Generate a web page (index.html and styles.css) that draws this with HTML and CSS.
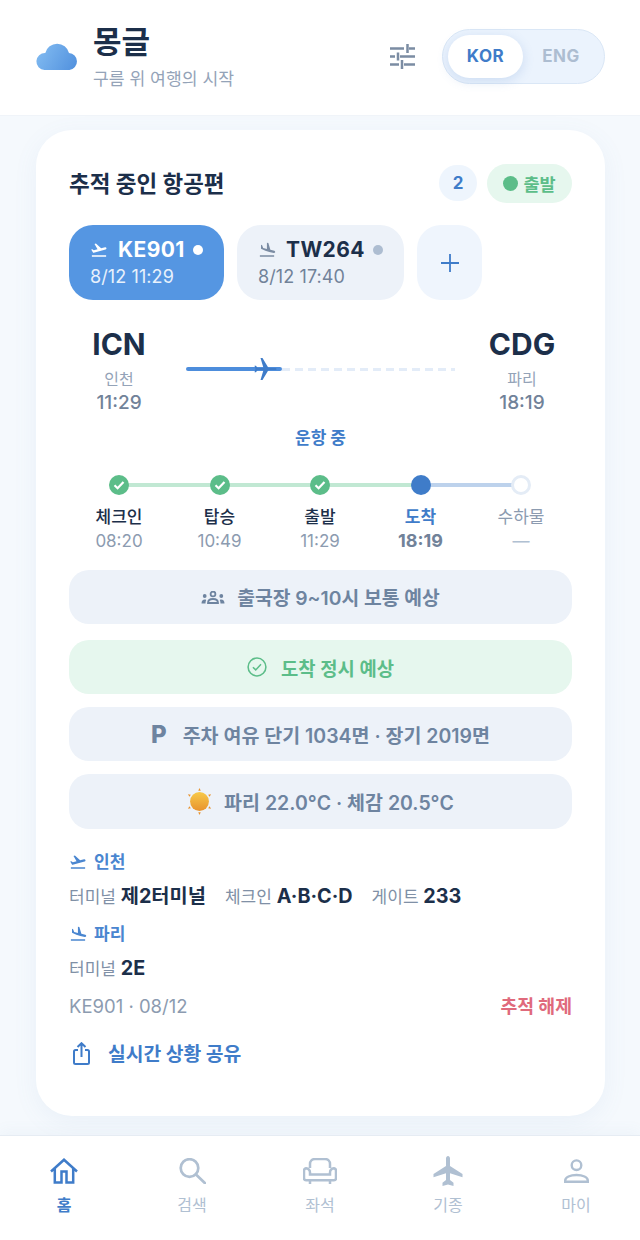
FILE: index.html
```html
<!DOCTYPE html>
<html lang="ko">
<head>
<meta charset="utf-8">
<title>몽글</title>
<link rel="stylesheet" href="styles.css">
</head>
<body>
<svg class="defs" width="0" height="0">
  <defs>
    <linearGradient id="cloudG" gradientUnits="userSpaceOnUse" x1="0" y1="4" x2="42" y2="28"><stop offset="0" stop-color="#84bdf2"/><stop offset="1" stop-color="#4f8fdd"/></linearGradient>
    <linearGradient id="sunG" x1="0" y1="0" x2="0" y2="1"><stop offset="0" stop-color="#f7c948"/><stop offset="1" stop-color="#e8932f"/></linearGradient>
    <symbol id="takeoff" viewBox="0 0 24 24"><path d="M2.500 19h19v2h-19zM22 9.500c-.2-.8-1-1.300-1.900-1.100L14.800 9.800 7.900 3.400l-1.900.5 4.100 7.200-5 1.300-2-1.500-1.500.4 2.600 4.500.8-.2 15.800-4.200c.8-.3 1.300-1.100 1.200-1.900z"/></symbol>
    <symbol id="landing" viewBox="0 0 24 24"><path d="M2.500 19h19v2h-19zM9.800 13.100l5.300 1.400 5.900 1.600c.8.200 1.700-.3 1.900-1.100.2-.8-.3-1.700-1.100-1.900l-5.300-1.400L13.800 2.800 11.900 2.300v8.300L6.900 9.200 5.500 5.500 4 5.100v5.200z"/></symbol>
  </defs>
</svg>
<div class="app">
  <header class="top">
    <div class="brand">
      <svg class="cloud" viewBox="0 0 42 28"><path fill="url(#cloudG)" d="M8.500 28A8.500 8.500 0 0 1 9.300 11 A12.200 12.200 0 0 1 33 10.900 A8.600 8.600 0 0 1 33.500 28Z"/></svg>
      <div class="brand-text">
        <div class="brand-name">몽글</div>
        <div class="brand-sub">구름 위 여행의 시작</div>
      </div>
    </div>
    <div class="top-right">
      <svg class="sliders" viewBox="0 0 25 25" fill="none" stroke="#7b8ca3" stroke-width="2.500"><path d="M0 4.500h14M19 4.500h6M17.500 0v9M0 12.500h5M10 12.500h15M8 8.500v8M0 20.500h9M14 20.500h11M12 16v9"/></svg>
      <div class="lang">
        <span class="lang-on">KOR</span>
        <span class="lang-off">ENG</span>
      </div>
    </div>
  </header>

  <main class="main">
    <section class="card">
      <div class="card-head">
        <h2 class="card-title">추적 중인 항공편</h2>
        <div class="head-badges">
          <span class="count">2</span>
          <span class="status"><i class="status-dot"></i>출발</span>
        </div>
      </div>

      <div class="flights">
        <div class="flight active">
          <div class="flight-no"><svg class="fi"><use href="#takeoff"/></svg>KE901<i class="fdot"></i></div>
          <div class="flight-time">8/12 11:29</div>
        </div>
        <div class="flight idle">
          <div class="flight-no"><svg class="fi"><use href="#landing"/></svg>TW264<i class="fdot"></i></div>
          <div class="flight-time">8/12 17:40</div>
        </div>
        <div class="flight-add">
          <svg viewBox="0 0 18 18" fill="none" stroke="#3f7cc9" stroke-width="1.800"><path d="M9 0v18M0 9h18"/></svg>
        </div>
      </div>

      <div class="route">
        <div class="airport">
          <div class="code">ICN</div>
          <div class="city">인천</div>
          <div class="atime">11:29</div>
        </div>
        <div class="track">
          <div class="track-done"></div>
          <div class="track-rest"></div>
          <svg class="track-plane" viewBox="0 0 24 24"><path fill="#3f7cc9" d="M23.500 12c0-.6-.5-1-1.500-1H15.500L9.500 1H7.500l3 10H4.500L3 8.800H1.500L2.500 12l-1 3.200H3L4.500 13h6l-3 10h2l6-10H22c1 0 1.500-.4 1.500-1z"/></svg>
        </div>
        <div class="airport">
          <div class="code">CDG</div>
          <div class="city">파리</div>
          <div class="atime">18:19</div>
        </div>
      </div>

      <div class="route-status">운항 중</div>

      <div class="steps">
        <div class="step done">
          <span class="node"><svg viewBox="0 0 20 20" fill="none" stroke="#fff" stroke-width="2.200"><path d="M5.500 10.300l3.100 3 5.900-6.300"/></svg></span>
          <span class="step-label">체크인</span><span class="step-time">08:20</span>
        </div>
        <div class="step done">
          <span class="node"><svg viewBox="0 0 20 20" fill="none" stroke="#fff" stroke-width="2.200"><path d="M5.500 10.300l3.100 3 5.900-6.300"/></svg></span>
          <span class="step-label">탑승</span><span class="step-time">10:49</span>
        </div>
        <div class="step done">
          <span class="node"><svg viewBox="0 0 20 20" fill="none" stroke="#fff" stroke-width="2.200"><path d="M5.500 10.300l3.100 3 5.900-6.300"/></svg></span>
          <span class="step-label">출발</span><span class="step-time">11:29</span>
        </div>
        <div class="step current">
          <span class="node"></span>
          <span class="step-label">도착</span><span class="step-time">18:19</span>
        </div>
        <div class="step todo">
          <span class="node"></span>
          <span class="step-label">수하물</span><span class="step-time">—</span>
        </div>
      </div>

      <div class="infos">
        <div class="info crowd">
          <svg class="i-people" viewBox="0 0 24 13" fill="#6e84a0"><circle cx="12" cy="3" r="2.400" fill="none" stroke="#6e84a0" stroke-width="1.800"/><path d="M7 12c0-2.600 2.200-4 5-4s5 1.400 5 4z" fill="none" stroke="#6e84a0" stroke-width="1.800"/><circle cx="3.700" cy="5" r="1.900"/><circle cx="20.300" cy="5" r="1.900"/><path d="M.5 12.500c0-2.500 1.300-4 3.300-4 .6 0 1 .1 1.400.4-.5 1-.7 2.200-.7 3.600zM23.500 12.500c0-2.500-1.300-4-3.300-4-.6 0-1 .1-1.400.4.5 1 .7 2.200.7 3.600z"/></svg>
          <span>출국장 9~10시 보통 예상</span>
        </div>
        <div class="info good">
          <svg class="i-check" viewBox="0 0 22 22" fill="none" stroke="#5cbd89" stroke-width="1.700"><circle cx="11" cy="11" r="9.800"/><path d="M6.500 11.200l3.100 3 5.800-6.200"/></svg>
          <span>도착 정시 예상</span>
        </div>
        <div class="info">
          <span class="i-p">P</span>
          <span>주차 여유 단기 1034면 · 장기 2019면</span>
        </div>
        <div class="info">
          <svg class="i-sun" viewBox="0 0 26 28"><circle cx="13" cy="14" r="9.800" fill="url(#sunG)"/><path fill="#e8932f" d="M13 0l1.300 2.800h-2.600zM13 28l-1.300-2.800h2.600zM1 6.500l3 .6-1.500 2zM25 6.500l-3 .6 1.500 2zM1 21.500l3-.6-1.500-2zM25 21.500l-3-.6 1.500-2z"/></svg>
          <span>파리 22.0°C · 체감 20.5°C</span>
        </div>
      </div>

      <div class="details">
        <div class="d-head"><svg class="di"><use href="#takeoff"/></svg>인천</div>
        <div class="d-row">
          <span class="d-item">터미널 <b>제2터미널</b></span>
          <span class="d-item">체크인 <b>A·B·C·D</b></span>
          <span class="d-item">게이트 <b>233</b></span>
        </div>
        <div class="d-head second"><svg class="di"><use href="#landing"/></svg>파리</div>
        <div class="d-row">
          <span class="d-item">터미널 <b>2E</b></span>
        </div>
      </div>

      <div class="meta">
        <span class="meta-id">KE901 · 08/12</span>
        <span class="meta-off">추적 해제</span>
      </div>

      <div class="share">
        <svg viewBox="0 0 17 23" fill="none" stroke="#3f7cc9" stroke-width="2"><path d="M5 8H2.500A1.500 1.500 0 0 0 1 9.500v11A1.500 1.500 0 0 0 2.500 22h12a1.500 1.500 0 0 0 1.500-1.500v-11A1.500 1.500 0 0 0 14.500 8H12M8.500 15V1.500M4.500 5l4-3.800 4 3.800"/></svg>
        <span>실시간 상황 공유</span>
      </div>
    </section>
  </main>

  <nav class="tabs">
    <div class="tab on">
      <span class="tab-ico"><svg class="ico-home" viewBox="0 0 28 26" fill="none" stroke="#3f7cc9" stroke-width="2.500"><path d="M1 13.500L14 1.800 27 13.500M4.800 10.500v14h6.700v-11h5v11h6.700v-14"/></svg></span>
      <span class="tab-label">홈</span>
    </div>
    <div class="tab">
      <span class="tab-ico"><svg class="ico-search" viewBox="0 0 27 26" fill="none" stroke="#b0c0d2" stroke-width="2.700"><circle cx="10.500" cy="10" r="8.800"/><path d="M17 16.500l8.800 8.500" stroke-linecap="round"/></svg></span>
      <span class="tab-label">검색</span>
    </div>
    <div class="tab">
      <span class="tab-ico"><svg class="ico-seat" viewBox="0 0 34 26" fill="none" stroke="#b0c0d2" stroke-width="2.500"><path d="M7 10V6a5 5 0 0 1 5-5h10a5 5 0 0 1 5 5v4M7 16.500h20V14.500a4.500 4.500 0 0 1 4-4.300 2.500 2.500 0 0 1 2 2.500v7.600a2 2 0 0 1-2 2H3a2 2 0 0 1-2-2v-7.600a2.500 2.500 0 0 1 2-2.500 4.500 4.500 0 0 1 4 4.300zM7 22.500V26M27 22.500V26"/></svg></span>
      <span class="tab-label">좌석</span>
    </div>
    <div class="tab">
      <span class="tab-ico"><svg class="ico-plane" viewBox="0 0 30 30" fill="#b0c0d2"><path d="M13 2.500c0-1.300.9-2.500 2-2.500s2 1.200 2 2.500V10l12.500 8v3.200L17 17.200V24l3.500 2.800V30L15 28.500 9.500 30v-3.200L13 24v-6.800L.5 21.200V18L13 10z"/></svg></span>
      <span class="tab-label">기종</span>
    </div>
    <div class="tab">
      <span class="tab-ico"><svg class="ico-me" viewBox="0 0 25 24" fill="none" stroke="#b0c0d2" stroke-width="2.400"><circle cx="12.500" cy="6.200" r="4.800"/><path d="M1.200 22.800v-1.300c0-3.400 5-5.500 11.300-5.500s11.300 2.100 11.300 5.500v1.300z"/></svg></span>
      <span class="tab-label">마이</span>
    </div>
  </nav>
</div>
</body>
</html>
```

FILE: styles.css
```css
* { box-sizing: border-box; }
html, body { margin: 0; padding: 0; }
body {
  width: 640px;
  height: 1240px;
  overflow: hidden;
  font-family: Inter, "Noto Sans CJK KR", sans-serif;
  background: #f5f9fd;
  color: #1c2f4a;
}
.defs { position: absolute; }
.app { display: flex; flex-direction: column; height: 1240px; }

.top {
  height: 116px;
  background: #fff;
  border-bottom: 1px solid #f0f4f9;
  display: flex;
  align-items: center;
  justify-content: space-between;
  padding: 0 35px 3px 36px;
  flex: none;
}
.brand { display: flex; align-items: center; gap: 15px; }
.cloud { width: 42px; height: 28px; }
.brand-text { display: flex; flex-direction: column; }
.brand-name { font-size: 31px; font-weight: 700; line-height: 40px; color: #1c2f4a; }
.brand-sub { font-size: 17.200px; line-height: 24px; color: #94a3b8; margin-top: 5px; }
.top-right { display: flex; align-items: center; gap: 27px; }
.sliders { width: 25px; height: 25px; }
.lang {
  width: 163px;
  height: 55px;
  border-radius: 28px;
  background: #ebf3fd;
  border: 1.500px solid #dae7f6;
  padding: 5px;
  display: flex;
  align-items: center;
  font-size: 17px;
  font-weight: 700;
  letter-spacing: .5px;
}
.lang-on {
  width: 75px;
  height: 43px;
  border-radius: 22px;
  background: #fff;
  color: #3f7cc9;
  display: flex;
  align-items: center;
  justify-content: center;
  box-shadow: 0 3px 12px rgba(80, 130, 200, .2);
}
.lang-off { flex: 1; text-align: center; color: #adbdd1; }

.main { flex: 1; padding: 14px 35px 0 36px; min-height: 0; }
.card {
  height: 986px;
  background: #fff;
  border-radius: 36px;
  padding: 33px 33px 0 33px;
  box-shadow: 0 6px 24px rgba(100, 140, 190, .08);
}
.card-head { display: flex; align-items: center; justify-content: space-between; height: 40px; }
.card-title { margin: 0; padding-bottom: 3px; font-size: 22.500px; font-weight: 700; color: #1c2f4a; }
.head-badges { display: flex; align-items: center; gap: 10px; }
.count {
  width: 38px; height: 36px; border-radius: 18px; background: #eef5fd;
  color: #3f7cc9; font-size: 17px; font-weight: 700;
  display: flex; align-items: center; justify-content: center;
}
.status {
  width: 85px; height: 39px; border-radius: 20px; background: #e6f7ee;
  color: #5cbd89; font-size: 17.500px; font-weight: 700;
  display: flex; align-items: center; justify-content: center; gap: 5px;
}
.status-dot { width: 15px; height: 15px; border-radius: 50%; background: #5cbd89; }

.flights { display: flex; gap: 13px; margin-top: 22px; }
.flight { height: 75px; border-radius: 24px; padding: 0 21px; display: flex; flex-direction: column; justify-content: center; }
.flight.active { width: 155px; background: #5596e2; color: #fff; }
.flight.idle { width: 167px; background: #edf2f9; }
.flight-no { display: flex; align-items: center; font-size: 21px; font-weight: 700; line-height: 28px; letter-spacing: .4px; }
.flight.idle .flight-no { color: #1c2f4a; }
.fi { width: 18px; height: 18px; margin-right: 10px; fill: #fff; }
.flight.idle .fi { fill: #7b8ca3; }
.fdot { width: 10px; height: 10px; border-radius: 50%; background: #fff; margin-left: 8px; }
.flight.idle .fdot { background: #adbdd1; }
.flight-time { font-size: 18px; line-height: 24px; margin-top: 1px; letter-spacing: .1px; }
.flight.active .flight-time { color: #e8f1fc; }
.flight.idle .flight-time { color: #718299; }
.flight-add {
  width: 65px; height: 75px; border-radius: 24px; background: #eff5fd;
  display: flex; align-items: center; justify-content: center;
}
.flight-add svg { width: 18px; height: 18px; }

.route { display: flex; align-items: flex-start; justify-content: space-between; margin-top: 24px; padding: 0 16px; }
.airport { display: flex; flex-direction: column; align-items: center; width: 68px; }
.code { font-size: 30px; font-weight: 700; line-height: 40px; color: #1c2f4a; }
.city { font-size: 16px; line-height: 22px; color: #94a3b8; margin-top: 4px; }
.atime { font-size: 19px; font-weight: 500; line-height: 24px; color: #718299; margin-top: 1px; }
.track { flex: 1; position: relative; height: 4px; margin: 43px 33px 0; display: flex; }
.track-done { width: 96px; height: 4px; background: #4d8ddc; border-radius: 2px; }
.track-rest {
  flex: 1; height: 3px; margin-top: .5px;
  background: repeating-linear-gradient(90deg, #e3ecf8 0 8px, transparent 8px 13px);
}
.track-plane { position: absolute; left: 67px; top: -10px; width: 24px; height: 24px; }

.route-status { text-align: center; font-size: 17px; font-weight: 700; color: #3f7cc9; line-height: 22px; margin-top: 12px; }

.steps { display: flex; justify-content: space-between; margin: 26px 1px 0 0; position: relative; }
.steps::before {
  content: ""; position: absolute; left: 50px; width: 301.500px; top: 8px; height: 4px;
  background: #c1e8d3;
}
.steps::after {
  content: ""; position: absolute; left: 351.500px; width: 100.500px; top: 8px; height: 4px;
  background: #bdd2ec;
}
.step { width: 100px; display: flex; flex-direction: column; align-items: center; position: relative; z-index: 1; }
.node { width: 20px; height: 20px; border-radius: 50%; display: block; }
.node svg { width: 20px; height: 20px; display: block; }
.done .node { background: #5cbd89; }
.current .node { background: #3f7cc9; }
.todo .node { background: #fff; border: 3px solid #e4ecf6; }
.step-label { font-size: 17px; font-weight: 500; line-height: 24px; margin-top: 10px; color: #1c2f4a; }
.step-time { font-size: 17px; line-height: 24px; color: #8c9bb0; }
.current .step-label { color: #3f7cc9; font-weight: 700; }
.current .step-time { color: #718299; font-size: 18px; font-weight: 700; }
.todo .step-label { color: #8c9bb0; font-weight: 400; }
.todo .step-time { color: #b0c0d2; }

.infos { display: flex; flex-direction: column; margin-top: 17px; gap: 13px; }
.info {
  height: 54px; border-radius: 20px; background: #edf2f9;
  display: flex; align-items: center; justify-content: center; gap: 12px;
  font-size: 19.500px; font-weight: 600; color: #6e84a0;
}
.info:last-child { height: 55px; }
.info.crowd { margin-bottom: 3px; font-size: 19.300px; }
.info.good { background: #e6f7ee; color: #5cbd89; gap: 14px; font-size: 18.800px; }
.i-people { width: 24px; height: 13px; }
.i-check { width: 20px; height: 20px; }
.i-p { font-size: 24px; font-weight: 800; color: #6e84a0; margin-right: 4px; }
.i-sun { width: 25px; height: 27px; }

.details { margin-top: 21px; }
.d-head { display: flex; align-items: center; gap: 7px; font-size: 17px; font-weight: 700; color: #4a86d0; line-height: 24px; }
.d-head.second { margin-top: 10px; }
.di { width: 18px; height: 18px; fill: #4a86d0; }
.d-row { display: flex; gap: 19px; font-size: 17px; color: #8090a6; line-height: 30px; margin-top: 7px; }
.d-item b { font-size: 19.800px; font-weight: 700; color: #1c2f4a; }

.meta { display: flex; justify-content: space-between; align-items: center; margin-top: 9px; line-height: 26px; }
.meta-id { font-size: 18.500px; color: #8c9bb0; }
.meta-off { font-size: 18.300px; font-weight: 700; color: #e06a7c; }

.share { display: flex; align-items: center; gap: 18px; margin-top: 20px; font-size: 19.300px; font-weight: 700; color: #3f7cc9; }
.share svg { width: 17px; height: 23px; margin-left: 4px; }

.tabs {
  flex: none; height: 105px; background: #fff; border-top: 1.500px solid #e6ecf3;
  display: flex; padding: 19.500px 0 0;
  box-shadow: 0 -4px 14px rgba(100, 130, 170, .05);
}
.tab { width: 128px; display: flex; flex-direction: column; align-items: center; color: #b0c0d2; font-size: 16px; }
.tab-ico { height: 30px; display: flex; align-items: center; }
.tab-label { line-height: 24px; margin-top: 7px; }
.ico-home { width: 28px; height: 26px; }
.ico-search { width: 27px; height: 26px; }
.ico-seat { width: 34px; height: 26px; }
.ico-plane { width: 30px; height: 30px; }
.ico-me { width: 25px; height: 24px; }
.tab.on { color: #3f7cc9; font-weight: 700; }
```
